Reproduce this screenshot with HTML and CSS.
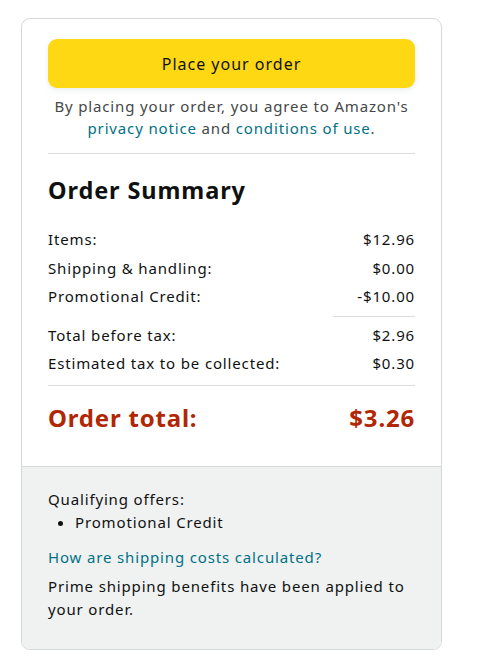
FILE: index.html
```html
<!DOCTYPE html>
<html lang="en">
<head>
<meta charset="utf-8">
<title>Order Summary</title>
<link rel="stylesheet" href="styles.css">
</head>
<body>
<div class="page">
  <section class="card">
    <div class="main">
      <button class="place-btn" type="button">Place your order</button>
      <p class="legal">By placing your order, you agree to Amazon's <a href="#">privacy notice</a> and <a href="#">conditions of use</a>.</p>
      <hr class="divider">
      <h2 class="title">Order Summary</h2>
      <div class="rows">
        <div class="row"><span>Items:</span><span>$12.96</span></div>
        <div class="row"><span>Shipping &amp; handling:</span><span>$0.00</span></div>
        <div class="row"><span>Promotional Credit:</span><span>-$10.00</span></div>
      </div>
      <hr class="divider short">
      <div class="rows">
        <div class="row"><span>Total before tax:</span><span>$2.96</span></div>
        <div class="row"><span>Estimated tax to be collected:</span><span>$0.30</span></div>
      </div>
      <hr class="divider mid">
      <div class="total"><span>Order total:</span><span>$3.26</span></div>
    </div>
    <div class="foot">
      <p class="offers-title">Qualifying offers:</p>
      <ul class="offers">
        <li>Promotional Credit</li>
      </ul>
      <a class="ship-link" href="#">How are shipping costs calculated?</a>
      <p class="prime">Prime shipping benefits have been applied to your order.</p>
    </div>
  </section>
</div>
</body>
</html>
```

FILE: styles.css
```css
* { box-sizing: border-box; }
html, body { margin: 0; padding: 0; background: #fff; }
body {
  font-family: "Noto Sans", "Open Sans", sans-serif;
  color: #0F1111;
  font-size: 15px;
  letter-spacing: 0.85px;
}
.page { padding: 18px 0 0 21px; }
.card {
  width: 421px;
  border: 1px solid #D5D9D9;
  border-radius: 9px;
  overflow: hidden;
  box-shadow: 0 1px 2px rgba(0,0,0,0.04);
}
.main { padding: 20px 26px 33px; }
.place-btn {
  display: block;
  width: 100%;
  height: 49px;
  border: none;
  border-radius: 9px;
  background: #FFD814;
  font-family: inherit;
  font-size: 16px;
  letter-spacing: 1px;
  color: #0F1111;
  box-shadow: 0 2px 5px rgba(213,217,217,0.5);
  padding: 0;
}
.legal {
  margin: 7px 0 0;
  text-align: center;
  font-size: 15px;
  line-height: 22px;
  color: #454848;
}
.legal a, .ship-link { color: #007185; text-decoration: none; }
.divider {
  border: none;
  border-top: 1px solid #DDDDDD;
  margin: 14px 0 0;
  height: 0;
}
.title {
  margin: 21px 0 0;
  font-size: 23.5px;
  line-height: 30px;
  font-weight: 700;
  letter-spacing: 0.9px;
}
.rows { margin-top: 20px; }
.divider.short { margin: 5px 0 0 auto; width: 82px; }
.divider.short + .rows { margin-top: 4px; }
.row {
  display: flex;
  justify-content: space-between;
  line-height: 28.5px;
  font-size: 15px;
}
.divider.mid { margin-top: 7px; }
.total {
  display: flex;
  justify-content: space-between;
  margin-top: 17px;
  font-size: 24px;
  line-height: 30px;
  font-weight: 700;
  letter-spacing: 0.8px;
  color: #B12704;
}
.foot {
  background: #F0F2F2;
  border-top: 1px solid #D5D9D9;
  padding: 21px 26px 28px;
  font-size: 15px;
  line-height: 23px;
}
.offers-title { margin: 0; }
.offers { margin: 0; padding: 0 0 0 27px; }
.offers li { padding-left: 0; }
.ship-link { display: block; margin-top: 12px; }
.prime { margin: 6px 0 0; }
```
